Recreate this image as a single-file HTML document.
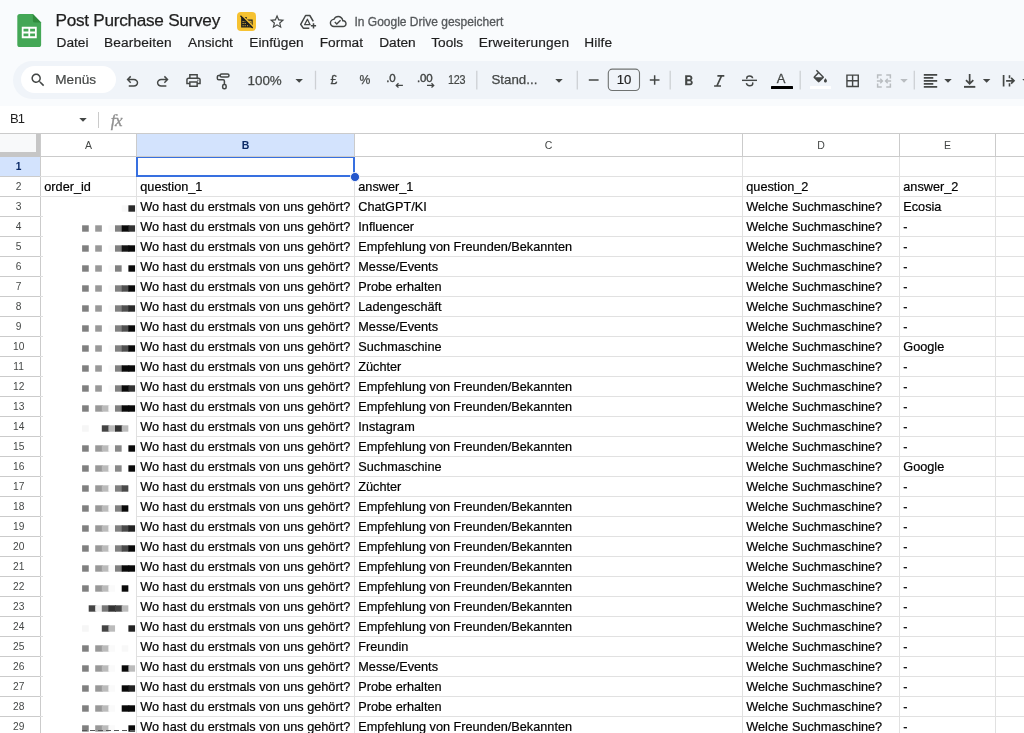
<!DOCTYPE html>
<html lang="de"><head><meta charset="utf-8"><title>Post Purchase Survey</title>
<style>
html,body{margin:0;padding:0;}
#w{position:absolute;left:0;top:0;width:1024px;height:733px;overflow:hidden;will-change:transform;}
body{width:1024px;height:733px;overflow:hidden;background:#f9fbfd;position:relative;font-family:"Liberation Sans",Arial,sans-serif;color:#1f1f1f;}
.abs{position:absolute;}
.t{position:absolute;white-space:nowrap;line-height:1;}
.menu{position:absolute;top:35px;font-size:13.7px;color:#1f1f1f;-webkit-text-stroke:0.2px #1f1f1f;white-space:nowrap;line-height:16px;}
.tb{position:absolute;left:13px;top:61px;width:1040px;height:38px;border-radius:19px;background:#f0f4f9;}
.sep{position:absolute;width:1px;background:#cbcbcb;top:71px;height:19px;}
svg{position:absolute;overflow:visible;}
.fbar{position:absolute;left:0;top:106px;width:1024px;height:27px;background:#fff;border-bottom:1px solid #cbcbcb;}
.grid{position:absolute;left:0;top:133px;width:1024px;height:600px;background:#fff;overflow:hidden;}
.hl{position:absolute;left:0;width:1024px;height:1px;background:#e1e1e1;}
.vl{position:absolute;top:0;width:1px;height:600px;background:#e1e1e1;}
.ch{position:absolute;top:1px;height:22px;line-height:23px;text-align:center;font-size:10.5px;color:#444746;}
.rh{position:absolute;left:0;width:37.300px;height:19px;line-height:19.5px;text-align:center;font-size:10.2px;color:#444746;}
.c{position:absolute;height:19px;line-height:21.3px;font-size:12.7px;color:#000;white-space:nowrap;overflow:hidden;-webkit-text-stroke:0.2px #000;}
.b{position:absolute;width:6.6px;height:6.6px;}
</style></head><body><div id="w">
<div class="t" id="title" style="left:55.5px;top:12px;font-size:17.2px;color:#1f1f1f;letter-spacing:-0.28px;-webkit-text-stroke:0.25px #1f1f1f;">Post Purchase Survey</div>
<div class="abs" style="left:237px;top:12px;width:19px;height:19.300px;border-radius:4px;background:#f6c232;"></div>
<div class="t" id="saved" style="left:354.500px;top:15.500px;font-size:12px;color:#55585b;-webkit-text-stroke:0.3px #55585b;">In Google Drive gespeichert</div>
<div class="menu" id="m0" style="left:56.5px">Datei</div>
<div class="menu" id="m1" style="left:104px;letter-spacing:0.16px">Bearbeiten</div>
<div class="menu" id="m2" style="left:188px">Ansicht</div>
<div class="menu" id="m3" style="left:249.3px;letter-spacing:0.05px">Einfügen</div>
<div class="menu" id="m4" style="left:319.7px">Format</div>
<div class="menu" id="m5" style="left:379.2px">Daten</div>
<div class="menu" id="m6" style="left:431.2px">Tools</div>
<div class="menu" id="m7" style="left:478.8px;letter-spacing:0.18px">Erweiterungen</div>
<div class="menu" id="m8" style="left:584.3px;letter-spacing:0.1px">Hilfe</div>
<div class="tb"></div>
<div class="abs" style="left:21px;top:66px;width:95px;height:27px;border-radius:13.500px;background:#fff;"></div>
<div class="t" id="menus" style="left:55.300px;top:73.200px;font-size:13.600px;color:#444746;-webkit-text-stroke:0.2px #444746;">Menüs</div>
<div class="t" id="zoom" style="left:247.500px;top:73.700px;font-size:13.400px;color:#444746;-webkit-text-stroke:0.25px #444746;">100%</div>
<div class="t" id="pound" style="left:330.600px;top:73.600px;font-size:12.200px;color:#444746;-webkit-text-stroke:0.3px #444746">£</div>
<div class="t" id="pct" style="left:359.500px;top:73.600px;font-size:12.200px;letter-spacing:-0.3px;color:#444746;-webkit-text-stroke:0.25px #444746">%</div>
<div class="t" id="d0" style="left:386.300px;top:73.200px;font-size:11.500px;color:#444746;-webkit-text-stroke:0.4px #444746;letter-spacing:-0.2px">.0</div>
<div class="t" id="d00" style="left:417px;top:73.200px;font-size:11.500px;color:#444746;-webkit-text-stroke:0.4px #444746;letter-spacing:-0.2px">.00</div>
<div class="t" id="n123" style="left:448.300px;top:73.800px;font-size:12.300px;color:#444746;letter-spacing:-0.3px;transform:scaleX(0.88);transform-origin:0 0;-webkit-text-stroke:0.2px #444746">123</div>
<div class="t" id="stand" style="left:491.500px;top:73.200px;font-size:13.300px;color:#444746;-webkit-text-stroke:0.25px #444746;">Stand...</div>
<div class="t" id="ten" style="left:608px;width:32px;text-align:center;top:73.300px;font-size:13.200px;color:#1f1f1f;-webkit-text-stroke:0.2px #1f1f1f;">10</div>
<div class="t" id="tcA" style="left:776.700px;top:72.300px;font-size:13px;color:#444746;-webkit-text-stroke:0.3px #444746">A</div>
<div class="abs" style="left:770.500px;top:85.800px;width:22px;height:3.700px;border-radius:0.500px;background:#000"></div>
<div class="abs" style="left:809.700px;top:85.800px;width:21.800px;height:3.700px;border-radius:0.500px;background:#fff"></div>
<div class="fbar"></div>
<div class="t" id="b1" style="left:9.900px;top:112px;font-size:13px;color:#1f1f1f;letter-spacing:-0.800px">B1</div>
<div class="abs" style="left:98px;top:112px;width:1px;height:16px;background:#cbcbcb"></div>
<div class="t" id="fx" style="left:110.700px;top:111.700px;font-size:17px;color:#909090;font-family:'Liberation Serif',serif;font-style:italic;letter-spacing:-0.5px;-webkit-text-stroke:0.35px #909090">fx</div>
<svg style="left:0;top:0" width="1024" height="133" viewBox="0 0 1024 133">
<svg x="17.3" y="14" overflow="visible" width="24.300" height="33" viewBox="0 0 25 33" preserveAspectRatio="none">
<path d="M2.6 0H16L24.5 8.6V30.4Q24.5 33 21.9 33H2.6Q0 33 0 30.400V2.600Q0 0 2.600 0Z" fill="#44a756"/>
<path d="M16 0L24.500 8.600H18.200Q16 8.600 16 6.400Z" fill="#2f8a3c"/>
<path d="M4.600 12.800H20v11.400H4.600Z M6.400 14.700v2.900h5v-2.900Z M13.200 14.700v2.900h5v-2.900Z M6.400 19.400v2.900h5v-2.900Z M13.200 19.400v2.900h5v-2.900Z" fill="#fff" fill-rule="evenodd"/>
</svg>
<svg x="240" y="15" overflow="visible" width="13.500" height="13.500" viewBox="0 0 24 24">
<path d="M2 3.500H12V8H22.500V22H2Z" fill="#1f1f1f"/>
<path d="M4.600 10.500h1.800v1.800H4.600zM8.300 10.500h1.800v1.800H8.300zM4.600 14.300h1.800v1.800H4.600zM8.300 14.300h1.800v1.800H8.300zM4.600 18h1.800v1.800H4.600zM8.300 18h1.800v1.800H8.300zM12.600 18h1.800v1.800h-1.800zM16.600 18h1.800v1.800h-1.800zM14 10h6.500v1.800H14zM20.500 10v6h-1.600v-6z" fill="#f6c232"/>
<path d="M3.200 0.200L24.700 21.700" stroke="#f6c232" stroke-width="2.600" fill="none"/>
<path d="M0.800 1.300L22.600 23.100" stroke="#1f1f1f" stroke-width="2.300" fill="none"/>
</svg>
<svg x="268.3" y="13" overflow="visible" width="17.500" height="17.500" viewBox="0 0 24 24"><path fill="#444746" d="M22 9.240l-7.190-.620L12 2 9.190 8.630 2 9.240l5.460 4.730L5.820 21 12 17.270 18.180 21l-1.630-7.030L22 9.240zM12 15.400l-3.760 2.270 1-4.280-3.320-2.880 4.380-.380L12 6.100l1.710 4.040 4.380.380-3.320 2.880 1 4.280L12 15.400z"/></svg>
<svg x="299" y="13" overflow="visible" width="18" height="17" viewBox="299 13 18 17" fill="none" stroke="#444746" stroke-width="1.500" stroke-linejoin="round">
<path d="M309.300 28.200H303.300L300.700 24.400 305.600 15.500H309.800L313.300 21.300"/>
<path d="M307.400 19.300L304.600 24.700H310.100Z" stroke-width="1.300"/>
<path d="M313.500 23.200V28.500M310.900 25.850H316.100"/>
</svg>
<svg x="329.7" y="13" overflow="visible" width="17" height="17" viewBox="0 0 24 24"><path fill="#444746" d="M19.350 10.040C18.670 6.590 15.640 4 12 4 9.110 4 6.600 5.640 5.350 8.040 2.340 8.360 0 10.910 0 14c0 3.310 2.690 6 6 6h13c2.760 0 5-2.240 5-5 0-2.640-2.050-4.780-4.650-4.960zM19 18H6c-2.210 0-4-1.790-4-4 0-2.050 1.530-3.760 3.560-3.970l1.070-.110.500-.950C8.080 7.140 9.940 6 12 6c2.620 0 4.880 1.860 5.390 4.430l.300 1.500 1.530.110c1.560.100 2.780 1.410 2.780 2.960 0 1.650-1.350 3-3 3zm-9-3.820l-2.090-2.090L6.500 13.500 10 17l6.010-6.010-1.410-1.410z"/></svg>
<svg x="29.25" y="71.25" overflow="visible" width="17.5" height="17.5" viewBox="0 0 24 24"><path fill="#444746" d="M15.500 14h-.790l-.280-.270C15.410 12.590 16 11.110 16 9.500 16 5.910 13.090 3 9.500 3S3 5.910 3 9.500 5.910 16 9.500 16c1.610 0 3.090-.590 4.230-1.570l.270.280v.790l5 4.990L20.490 19l-4.990-5zm-6 0C7.010 14 5 11.990 5 9.500S7.010 5 9.500 5 14 7.010 14 9.500 11.990 14 9.500 14z"/></svg>
<svg x="123.65" y="72.95" overflow="visible" width="17.5" height="17.5" viewBox="0 -960 960 960"><path fill="#444746" d="M280-200v-80h284q63 0 109.500-40T720-420q0-60-46.500-100T564-560H312l104 104-56 56-200-200 200-200 56 56-104 104h252q97 0 166.500 63T800-420q0 94-69.500 157T564-200H280Z"/></svg>
<svg x="153.95" y="72.95" overflow="visible" width="17.5" height="17.5" viewBox="0 -960 960 960"><path fill="#444746" d="M396-200q-97 0-166.500-63T160-420q0-94 69.500-157T396-640h252L544-744l56-56 200 200-200 200-56-56 104-104H396q-63 0-109.500 40T240-420q0 60 46.500 100T396-280h284v80H396Z"/></svg>
<svg x="184.75" y="71.75" overflow="visible" width="17.5" height="17.5" viewBox="0 0 24 24"><path fill="#444746" d="M19 8h-1V3H6v5H5c-1.660 0-3 1.340-3 3v6h4v4h12v-4h4v-6c0-1.660-1.340-3-3-3zM8 5h8v3H8V5zm8 12v2H8v-4h8v2zm2-2v-2H6v2H4v-4c0-.550.450-1 1-1h14c.550 0 1 .450 1 1v4h-2z"/><circle cx="18" cy="11.500" r="1" fill="#444746"/></svg>
<svg x="215" y="72" overflow="visible" width="17" height="19" viewBox="215 72 17 19" fill="none" stroke="#444746" stroke-width="1.500">
<rect x="220.150" y="74" width="8.850" height="2.900" rx="1.450"/>
<path d="M220 75.500H218.700Q217.350 75.500 217.350 76.850V78.400Q217.350 79.750 218.700 79.750H223.100Q224.400 79.750 224.400 81.050V84"/>
<rect x="222.650" y="84.450" width="3.500" height="4.300" rx="1.500"/></svg>
<svg x="290.2" y="71.4" overflow="visible" width="18" height="18" viewBox="0 0 24 24"><path fill="#444746" d="M7 10l5 5 5-5z"/></svg>
<svg x="300" y="60" overflow="visible" width="700" height="40" viewBox="300 60 700 40" fill="none" stroke="#cdd0d4" stroke-width="1.300"><path d="M315.500 70.700V89.500M476.800 70.700V89.500M577.300 70.700V89.500M670.200 70.700V89.500M800.200 70.700V89.500M914.300 70.700V89.500"/></svg>
<svg x="395" y="81.9" overflow="visible" width="9" height="7" viewBox="0 0 9 7"><path d="M7.900 3.500H1.600M3.500 1.400L1.300 3.500 3.500 5.600" fill="none" stroke="#444746" stroke-width="1.300"/></svg>
<svg x="426" y="81.9" overflow="visible" width="9" height="7" viewBox="0 0 9 7"><path d="M1 3.500H7.400M5.500 1.400L7.700 3.500 5.500 5.600" fill="none" stroke="#444746" stroke-width="1.300"/></svg>
<svg x="550" y="71.4" overflow="visible" width="18" height="18" viewBox="0 0 24 24"><path fill="#444746" d="M7 10l5 5 5-5z"/></svg>
<svg x="585" y="66" overflow="visible" width="80" height="28" viewBox="585 66 80 28" fill="none"><path d="M588.800 80H598.600M649.800 80H659.500M654.650 75.200V84.800" stroke="#444746" stroke-width="1.500"/><rect x="608.300" y="69.100" width="31.200" height="21.400" rx="4" stroke="#6f7271" stroke-width="1.100"/></svg>
<svg x="680.2" y="72.5" overflow="visible" width="17" height="17" viewBox="0 0 24 24"><path fill="#444746" d="M15.600 10.790c.970-.670 1.650-1.770 1.650-2.790 0-2.260-1.750-4-4-4H7v14h7.040c2.090 0 3.710-1.700 3.710-3.790 0-1.520-.860-2.820-2.150-3.420zM10 6.500h3c.830 0 1.500.670 1.500 1.500s-.670 1.500-1.500 1.500h-3v-3zm3.500 9H10v-3h3.500c.830 0 1.500.670 1.500 1.500s-.670 1.500-1.500 1.500z"/></svg>
<svg x="712" y="73" overflow="visible" width="15" height="16" viewBox="712 73 15 16" fill="none" stroke="#444746" stroke-width="1.700"><path d="M717.400 75.900H724.300M714.100 86H721M721.500 75.900L716.900 86"/></svg>
<svg x="741" y="72.2" overflow="visible" width="17" height="17" viewBox="0 0 24 24" fill="none" stroke="#444746">
<path d="M16.400 8.600C16.200 6.600 14.600 5.300 12.200 5.300 9.700 5.300 8.200 6.500 8.200 8.300c0 .5.100.9.300 1.200" stroke-width="2.100"/>
<path d="M7.600 15.500c.3 2.200 2 3.500 4.600 3.500 2.700 0 4.400-1.300 4.400-3.200 0-.6-.1-1.100-.4-1.500" stroke-width="2.100"/>
<path d="M1.400 11.500H22.600" stroke-width="2"/></svg>
<svg x="811.2" y="69.7" overflow="visible" width="18" height="18" viewBox="0 0 24 24"><path fill="#444746" d="M16.560 8.940L7.620 0 6.210 1.410l2.380 2.380-5.150 5.150c-.590.590-.590 1.540 0 2.120l5.500 5.500c.290.290.680.440 1.060.440s.770-.150 1.060-.440l5.500-5.500c.590-.580.590-1.530 0-2.120zM5.210 10L10 5.210 14.790 10H5.210zM19 11.500s-2 2.170-2 3.500c0 1.100.900 2 2 2s2-.900 2-2c0-1.330-2-3.500-2-3.500z"/></svg>
<svg x="844.1" y="72.3" overflow="visible" width="17" height="17" viewBox="0 0 24 24"><path fill="#444746" d="M3 3v18h18V3H3zm8 16H5v-6h6v6zm0-8H5V5h6v6zm8 8h-6v-6h6v6zm0-8h-6V5h6v6z"/></svg>
<svg x="875" y="72" overflow="visible" width="18" height="18" viewBox="0 0 24 24" fill="none" stroke="#b9bdc1" stroke-width="2">
<path d="M9 4H3.500V8.800M9 20H3.500V15.200M15 4H20.500V8.800M15 20H20.500V15.200"/>
<path d="M2.500 12H9.500M7 9L10 12 7 15M21.500 12H14.500M17 9L14 12 17 15" stroke-width="1.800"/></svg>
<svg x="895" y="71.4" overflow="visible" width="18" height="18" viewBox="0 0 24 24"><path fill="#b9bdc1" d="M7 10l5 5 5-5z"/></svg>
<svg x="920" y="70" overflow="visible" width="20" height="22" viewBox="920 70 20 22" fill="none" stroke="#444746" stroke-width="1.650"><path d="M923.800 74.900H937.200M923.800 77.900H933.300M923.800 80.900H937.200M923.800 83.900H933.300M923.800 86.900H937.200"/></svg>
<svg x="939" y="71.4" overflow="visible" width="18" height="18" viewBox="0 0 24 24"><path fill="#444746" d="M7 10l5 5 5-5z"/></svg>
<svg x="960" y="70" overflow="visible" width="20" height="22" viewBox="960 70 20 22" fill="none" stroke="#444746" stroke-width="1.700"><path d="M969.650 74V83.300M966 80.100L969.650 83.750 973.300 80.100"/><path d="M964 86.850H975.300" stroke-width="1.900"/></svg>
<svg x="977.6" y="71.4" overflow="visible" width="18" height="18" viewBox="0 0 24 24"><path fill="#444746" d="M7 10l5 5 5-5z"/></svg>
<svg x="1000" y="70" overflow="visible" width="20" height="22" viewBox="1000 70 20 22" fill="none" stroke="#444746" stroke-width="1.700">
<path d="M1003.600 75V86.600M1006.100 80.800H1013.300M1011.100 77.900L1014 80.800 1011.100 83.700"/><path d="M1009.500 75.300V78.300M1009.500 83.300V86.600" stroke-width="1.600"/></svg>
<svg x="1017" y="71.4" overflow="visible" width="18" height="18" viewBox="0 0 24 24"><path fill="#444746" d="M7 10l5 5 5-5z"/></svg>
<svg x="74" y="110.5" overflow="visible" width="18" height="18" viewBox="0 0 24 24"><path fill="#444746" d="M7 10l5 5 5-5z"/></svg>
</svg>
<div class="grid">
<div class="hl" style="top:0;background:#cbcbcb"></div>
<div class="abs" style="left:0;top:1px;width:41px;height:23px;background:#c6c6c6"></div>
<div class="abs" style="left:0;top:1px;width:36px;height:18px;background:#f8f9fa"></div>
<div class="abs" style="left:137px;top:1px;width:217px;height:22px;background:#d3e3fd"></div>
<div class="abs" style="left:0;top:24px;width:40px;height:19px;background:#d3e3fd"></div>
<div class="ch" style="left:41px;width:95px;">A</div>
<div class="vl" style="left:136px"></div>
<div class="abs" style="left:136px;top:0;width:1px;height:23px;background:#cbcbcb"></div>
<div class="ch" style="left:137px;width:217px;font-weight:bold;color:#0b2a66;">B</div>
<div class="vl" style="left:354px"></div>
<div class="abs" style="left:354px;top:0;width:1px;height:23px;background:#cbcbcb"></div>
<div class="ch" style="left:355px;width:387px;">C</div>
<div class="vl" style="left:742px"></div>
<div class="abs" style="left:742px;top:0;width:1px;height:23px;background:#cbcbcb"></div>
<div class="ch" style="left:743px;width:156px;">D</div>
<div class="vl" style="left:899px"></div>
<div class="abs" style="left:899px;top:0;width:1px;height:23px;background:#cbcbcb"></div>
<div class="ch" style="left:900px;width:95px;">E</div>
<div class="vl" style="left:995px"></div>
<div class="abs" style="left:995px;top:0;width:1px;height:23px;background:#cbcbcb"></div>
<div class="ch" style="left:996px;width:104px;">F</div>
<div class="vl" style="left:1100px"></div>
<div class="abs" style="left:1100px;top:0;width:1px;height:23px;background:#cbcbcb"></div>
<div class="vl" style="left:40px;background:#cbcbcb"></div>
<div class="hl" style="top:23px;left:41px;background:#cbcbcb"></div>
<div class="hl" style="top:43px"></div>
<div class="abs" style="left:0;top:43px;width:40px;height:1px;background:#cbcbcb"></div>
<div class="rh" style="top:24px;font-weight:bold;color:#0b2a66;">1</div>
<div class="hl" style="top:63px"></div>
<div class="abs" style="left:0;top:63px;width:40px;height:1px;background:#cbcbcb"></div>
<div class="rh" style="top:44px;">2</div>
<div class="c" style="left:44.3px;top:44px;width:91.5px">order_id</div>
<div class="c" style="left:140.3px;top:44px;width:213.5px">question_1</div>
<div class="c" style="left:358.3px;top:44px;width:383.5px">answer_1</div>
<div class="c" style="left:746.3px;top:44px;width:152.5px">question_2</div>
<div class="c" style="left:903.3px;top:44px;width:91.5px">answer_2</div>
<div class="hl" style="top:83px"></div>
<div class="abs" style="left:0;top:83px;width:40px;height:1px;background:#cbcbcb"></div>
<div class="rh" style="top:64px;">3</div>
<div class="c" style="left:140.3px;top:64px;width:213.5px">Wo hast du erstmals von uns gehört?</div>
<div class="c" style="left:358.3px;top:64px;width:383.5px">ChatGPT/KI</div>
<div class="c" style="left:746.3px;top:64px;width:152.5px">Welche Suchmaschine?</div>
<div class="c" style="left:903.3px;top:64px;width:91.5px">Ecosia</div>
<div class="hl" style="top:103px"></div>
<div class="abs" style="left:0;top:103px;width:40px;height:1px;background:#cbcbcb"></div>
<div class="rh" style="top:84px;">4</div>
<div class="c" style="left:140.3px;top:84px;width:213.5px">Wo hast du erstmals von uns gehört?</div>
<div class="c" style="left:358.3px;top:84px;width:383.5px">Influencer</div>
<div class="c" style="left:746.3px;top:84px;width:152.5px">Welche Suchmaschine?</div>
<div class="c" style="left:903.3px;top:84px;width:91.5px">-</div>
<div class="hl" style="top:123px"></div>
<div class="abs" style="left:0;top:123px;width:40px;height:1px;background:#cbcbcb"></div>
<div class="rh" style="top:104px;">5</div>
<div class="c" style="left:140.3px;top:104px;width:213.5px">Wo hast du erstmals von uns gehört?</div>
<div class="c" style="left:358.3px;top:104px;width:383.5px">Empfehlung von Freunden/Bekannten</div>
<div class="c" style="left:746.3px;top:104px;width:152.5px">Welche Suchmaschine?</div>
<div class="c" style="left:903.3px;top:104px;width:91.5px">-</div>
<div class="hl" style="top:143px"></div>
<div class="abs" style="left:0;top:143px;width:40px;height:1px;background:#cbcbcb"></div>
<div class="rh" style="top:124px;">6</div>
<div class="c" style="left:140.3px;top:124px;width:213.5px">Wo hast du erstmals von uns gehört?</div>
<div class="c" style="left:358.3px;top:124px;width:383.5px">Messe/Events</div>
<div class="c" style="left:746.3px;top:124px;width:152.5px">Welche Suchmaschine?</div>
<div class="c" style="left:903.3px;top:124px;width:91.5px">-</div>
<div class="hl" style="top:163px"></div>
<div class="abs" style="left:0;top:163px;width:40px;height:1px;background:#cbcbcb"></div>
<div class="rh" style="top:144px;">7</div>
<div class="c" style="left:140.3px;top:144px;width:213.5px">Wo hast du erstmals von uns gehört?</div>
<div class="c" style="left:358.3px;top:144px;width:383.5px">Probe erhalten</div>
<div class="c" style="left:746.3px;top:144px;width:152.5px">Welche Suchmaschine?</div>
<div class="c" style="left:903.3px;top:144px;width:91.5px">-</div>
<div class="hl" style="top:183px"></div>
<div class="abs" style="left:0;top:183px;width:40px;height:1px;background:#cbcbcb"></div>
<div class="rh" style="top:164px;">8</div>
<div class="c" style="left:140.3px;top:164px;width:213.5px">Wo hast du erstmals von uns gehört?</div>
<div class="c" style="left:358.3px;top:164px;width:383.5px">Ladengeschäft</div>
<div class="c" style="left:746.3px;top:164px;width:152.5px">Welche Suchmaschine?</div>
<div class="c" style="left:903.3px;top:164px;width:91.5px">-</div>
<div class="hl" style="top:203px"></div>
<div class="abs" style="left:0;top:203px;width:40px;height:1px;background:#cbcbcb"></div>
<div class="rh" style="top:184px;">9</div>
<div class="c" style="left:140.3px;top:184px;width:213.5px">Wo hast du erstmals von uns gehört?</div>
<div class="c" style="left:358.3px;top:184px;width:383.5px">Messe/Events</div>
<div class="c" style="left:746.3px;top:184px;width:152.5px">Welche Suchmaschine?</div>
<div class="c" style="left:903.3px;top:184px;width:91.5px">-</div>
<div class="hl" style="top:223px"></div>
<div class="abs" style="left:0;top:223px;width:40px;height:1px;background:#cbcbcb"></div>
<div class="rh" style="top:204px;">10</div>
<div class="c" style="left:140.3px;top:204px;width:213.5px">Wo hast du erstmals von uns gehört?</div>
<div class="c" style="left:358.3px;top:204px;width:383.5px">Suchmaschine</div>
<div class="c" style="left:746.3px;top:204px;width:152.5px">Welche Suchmaschine?</div>
<div class="c" style="left:903.3px;top:204px;width:91.5px">Google</div>
<div class="hl" style="top:243px"></div>
<div class="abs" style="left:0;top:243px;width:40px;height:1px;background:#cbcbcb"></div>
<div class="rh" style="top:224px;">11</div>
<div class="c" style="left:140.3px;top:224px;width:213.5px">Wo hast du erstmals von uns gehört?</div>
<div class="c" style="left:358.3px;top:224px;width:383.5px">Züchter</div>
<div class="c" style="left:746.3px;top:224px;width:152.5px">Welche Suchmaschine?</div>
<div class="c" style="left:903.3px;top:224px;width:91.5px">-</div>
<div class="hl" style="top:263px"></div>
<div class="abs" style="left:0;top:263px;width:40px;height:1px;background:#cbcbcb"></div>
<div class="rh" style="top:244px;">12</div>
<div class="c" style="left:140.3px;top:244px;width:213.5px">Wo hast du erstmals von uns gehört?</div>
<div class="c" style="left:358.3px;top:244px;width:383.5px">Empfehlung von Freunden/Bekannten</div>
<div class="c" style="left:746.3px;top:244px;width:152.5px">Welche Suchmaschine?</div>
<div class="c" style="left:903.3px;top:244px;width:91.5px">-</div>
<div class="hl" style="top:283px"></div>
<div class="abs" style="left:0;top:283px;width:40px;height:1px;background:#cbcbcb"></div>
<div class="rh" style="top:264px;">13</div>
<div class="c" style="left:140.3px;top:264px;width:213.5px">Wo hast du erstmals von uns gehört?</div>
<div class="c" style="left:358.3px;top:264px;width:383.5px">Empfehlung von Freunden/Bekannten</div>
<div class="c" style="left:746.3px;top:264px;width:152.5px">Welche Suchmaschine?</div>
<div class="c" style="left:903.3px;top:264px;width:91.5px">-</div>
<div class="hl" style="top:303px"></div>
<div class="abs" style="left:0;top:303px;width:40px;height:1px;background:#cbcbcb"></div>
<div class="rh" style="top:284px;">14</div>
<div class="c" style="left:140.3px;top:284px;width:213.5px">Wo hast du erstmals von uns gehört?</div>
<div class="c" style="left:358.3px;top:284px;width:383.5px">Instagram</div>
<div class="c" style="left:746.3px;top:284px;width:152.5px">Welche Suchmaschine?</div>
<div class="c" style="left:903.3px;top:284px;width:91.5px">-</div>
<div class="hl" style="top:323px"></div>
<div class="abs" style="left:0;top:323px;width:40px;height:1px;background:#cbcbcb"></div>
<div class="rh" style="top:304px;">15</div>
<div class="c" style="left:140.3px;top:304px;width:213.5px">Wo hast du erstmals von uns gehört?</div>
<div class="c" style="left:358.3px;top:304px;width:383.5px">Empfehlung von Freunden/Bekannten</div>
<div class="c" style="left:746.3px;top:304px;width:152.5px">Welche Suchmaschine?</div>
<div class="c" style="left:903.3px;top:304px;width:91.5px">-</div>
<div class="hl" style="top:343px"></div>
<div class="abs" style="left:0;top:343px;width:40px;height:1px;background:#cbcbcb"></div>
<div class="rh" style="top:324px;">16</div>
<div class="c" style="left:140.3px;top:324px;width:213.5px">Wo hast du erstmals von uns gehört?</div>
<div class="c" style="left:358.3px;top:324px;width:383.5px">Suchmaschine</div>
<div class="c" style="left:746.3px;top:324px;width:152.5px">Welche Suchmaschine?</div>
<div class="c" style="left:903.3px;top:324px;width:91.5px">Google</div>
<div class="hl" style="top:363px"></div>
<div class="abs" style="left:0;top:363px;width:40px;height:1px;background:#cbcbcb"></div>
<div class="rh" style="top:344px;">17</div>
<div class="c" style="left:140.3px;top:344px;width:213.5px">Wo hast du erstmals von uns gehört?</div>
<div class="c" style="left:358.3px;top:344px;width:383.5px">Züchter</div>
<div class="c" style="left:746.3px;top:344px;width:152.5px">Welche Suchmaschine?</div>
<div class="c" style="left:903.3px;top:344px;width:91.5px">-</div>
<div class="hl" style="top:383px"></div>
<div class="abs" style="left:0;top:383px;width:40px;height:1px;background:#cbcbcb"></div>
<div class="rh" style="top:364px;">18</div>
<div class="c" style="left:140.3px;top:364px;width:213.5px">Wo hast du erstmals von uns gehört?</div>
<div class="c" style="left:358.3px;top:364px;width:383.5px">Empfehlung von Freunden/Bekannten</div>
<div class="c" style="left:746.3px;top:364px;width:152.5px">Welche Suchmaschine?</div>
<div class="c" style="left:903.3px;top:364px;width:91.5px">-</div>
<div class="hl" style="top:403px"></div>
<div class="abs" style="left:0;top:403px;width:40px;height:1px;background:#cbcbcb"></div>
<div class="rh" style="top:384px;">19</div>
<div class="c" style="left:140.3px;top:384px;width:213.5px">Wo hast du erstmals von uns gehört?</div>
<div class="c" style="left:358.3px;top:384px;width:383.5px">Empfehlung von Freunden/Bekannten</div>
<div class="c" style="left:746.3px;top:384px;width:152.5px">Welche Suchmaschine?</div>
<div class="c" style="left:903.3px;top:384px;width:91.5px">-</div>
<div class="hl" style="top:423px"></div>
<div class="abs" style="left:0;top:423px;width:40px;height:1px;background:#cbcbcb"></div>
<div class="rh" style="top:404px;">20</div>
<div class="c" style="left:140.3px;top:404px;width:213.5px">Wo hast du erstmals von uns gehört?</div>
<div class="c" style="left:358.3px;top:404px;width:383.5px">Empfehlung von Freunden/Bekannten</div>
<div class="c" style="left:746.3px;top:404px;width:152.5px">Welche Suchmaschine?</div>
<div class="c" style="left:903.3px;top:404px;width:91.5px">-</div>
<div class="hl" style="top:443px"></div>
<div class="abs" style="left:0;top:443px;width:40px;height:1px;background:#cbcbcb"></div>
<div class="rh" style="top:424px;">21</div>
<div class="c" style="left:140.3px;top:424px;width:213.5px">Wo hast du erstmals von uns gehört?</div>
<div class="c" style="left:358.3px;top:424px;width:383.5px">Empfehlung von Freunden/Bekannten</div>
<div class="c" style="left:746.3px;top:424px;width:152.5px">Welche Suchmaschine?</div>
<div class="c" style="left:903.3px;top:424px;width:91.5px">-</div>
<div class="hl" style="top:463px"></div>
<div class="abs" style="left:0;top:463px;width:40px;height:1px;background:#cbcbcb"></div>
<div class="rh" style="top:444px;">22</div>
<div class="c" style="left:140.3px;top:444px;width:213.5px">Wo hast du erstmals von uns gehört?</div>
<div class="c" style="left:358.3px;top:444px;width:383.5px">Empfehlung von Freunden/Bekannten</div>
<div class="c" style="left:746.3px;top:444px;width:152.5px">Welche Suchmaschine?</div>
<div class="c" style="left:903.3px;top:444px;width:91.5px">-</div>
<div class="hl" style="top:483px"></div>
<div class="abs" style="left:0;top:483px;width:40px;height:1px;background:#cbcbcb"></div>
<div class="rh" style="top:464px;">23</div>
<div class="c" style="left:140.3px;top:464px;width:213.5px">Wo hast du erstmals von uns gehört?</div>
<div class="c" style="left:358.3px;top:464px;width:383.5px">Empfehlung von Freunden/Bekannten</div>
<div class="c" style="left:746.3px;top:464px;width:152.5px">Welche Suchmaschine?</div>
<div class="c" style="left:903.3px;top:464px;width:91.5px">-</div>
<div class="hl" style="top:503px"></div>
<div class="abs" style="left:0;top:503px;width:40px;height:1px;background:#cbcbcb"></div>
<div class="rh" style="top:484px;">24</div>
<div class="c" style="left:140.3px;top:484px;width:213.5px">Wo hast du erstmals von uns gehört?</div>
<div class="c" style="left:358.3px;top:484px;width:383.5px">Empfehlung von Freunden/Bekannten</div>
<div class="c" style="left:746.3px;top:484px;width:152.5px">Welche Suchmaschine?</div>
<div class="c" style="left:903.3px;top:484px;width:91.5px">-</div>
<div class="hl" style="top:523px"></div>
<div class="abs" style="left:0;top:523px;width:40px;height:1px;background:#cbcbcb"></div>
<div class="rh" style="top:504px;">25</div>
<div class="c" style="left:140.3px;top:504px;width:213.5px">Wo hast du erstmals von uns gehört?</div>
<div class="c" style="left:358.3px;top:504px;width:383.5px">Freundin</div>
<div class="c" style="left:746.3px;top:504px;width:152.5px">Welche Suchmaschine?</div>
<div class="c" style="left:903.3px;top:504px;width:91.5px">-</div>
<div class="hl" style="top:543px"></div>
<div class="abs" style="left:0;top:543px;width:40px;height:1px;background:#cbcbcb"></div>
<div class="rh" style="top:524px;">26</div>
<div class="c" style="left:140.3px;top:524px;width:213.5px">Wo hast du erstmals von uns gehört?</div>
<div class="c" style="left:358.3px;top:524px;width:383.5px">Messe/Events</div>
<div class="c" style="left:746.3px;top:524px;width:152.5px">Welche Suchmaschine?</div>
<div class="c" style="left:903.3px;top:524px;width:91.5px">-</div>
<div class="hl" style="top:563px"></div>
<div class="abs" style="left:0;top:563px;width:40px;height:1px;background:#cbcbcb"></div>
<div class="rh" style="top:544px;">27</div>
<div class="c" style="left:140.3px;top:544px;width:213.5px">Wo hast du erstmals von uns gehört?</div>
<div class="c" style="left:358.3px;top:544px;width:383.5px">Probe erhalten</div>
<div class="c" style="left:746.3px;top:544px;width:152.5px">Welche Suchmaschine?</div>
<div class="c" style="left:903.3px;top:544px;width:91.5px">-</div>
<div class="hl" style="top:583px"></div>
<div class="abs" style="left:0;top:583px;width:40px;height:1px;background:#cbcbcb"></div>
<div class="rh" style="top:564px;">28</div>
<div class="c" style="left:140.3px;top:564px;width:213.5px">Wo hast du erstmals von uns gehört?</div>
<div class="c" style="left:358.3px;top:564px;width:383.5px">Probe erhalten</div>
<div class="c" style="left:746.3px;top:564px;width:152.5px">Welche Suchmaschine?</div>
<div class="c" style="left:903.3px;top:564px;width:91.5px">-</div>
<div class="hl" style="top:603px"></div>
<div class="abs" style="left:0;top:603px;width:40px;height:1px;background:#cbcbcb"></div>
<div class="rh" style="top:584px;">29</div>
<div class="c" style="left:140.3px;top:584px;width:213.5px">Wo hast du erstmals von uns gehört?</div>
<div class="c" style="left:358.3px;top:584px;width:383.5px">Empfehlung von Freunden/Bekannten</div>
<div class="c" style="left:746.3px;top:584px;width:152.5px">Welche Suchmaschine?</div>
<div class="c" style="left:903.3px;top:584px;width:91.5px">-</div>
<div class="hl" style="top:623px"></div>
<div class="abs" style="left:0;top:623px;width:40px;height:1px;background:#cbcbcb"></div>
<div class="rh" style="top:604px;">30</div>
<div class="abs" style="left:42.500px;top:64.500px;width:93px;height:540px;background:#fff"></div>
<svg style="left:0;top:0" width="140" height="600" viewBox="0 0 140 600">
<rect x="121.7" y="72.3" width="7.6" height="6.4" fill="#f8f8f8"/>
<rect x="128.4" y="72.3" width="6.65" height="6.4" fill="#2a2a2a"/>
<rect x="82.1" y="92.3" width="6.65" height="6.4" fill="#808080"/>
<rect x="95.2" y="92.3" width="6.65" height="6.4" fill="#999"/>
<rect x="108.4" y="92.3" width="7.6" height="6.4" fill="#fafafa"/>
<rect x="115" y="92.3" width="7.6" height="6.4" fill="#808080"/>
<rect x="121.7" y="92.3" width="7.6" height="6.4" fill="#0a0a0a"/>
<rect x="128.4" y="92.3" width="6.65" height="6.4" fill="#333"/>
<rect x="82.1" y="112.3" width="6.65" height="6.4" fill="#808080"/>
<rect x="95.2" y="112.3" width="6.65" height="6.4" fill="#999"/>
<rect x="108.4" y="112.3" width="7.6" height="6.4" fill="#fafafa"/>
<rect x="115" y="112.3" width="7.6" height="6.4" fill="#808080"/>
<rect x="121.7" y="112.3" width="7.6" height="6.4" fill="#151515"/>
<rect x="128.4" y="112.3" width="6.65" height="6.4" fill="#0a0a0a"/>
<rect x="82.1" y="132.3" width="6.65" height="6.4" fill="#808080"/>
<rect x="95.2" y="132.3" width="6.65" height="6.4" fill="#999"/>
<rect x="108.4" y="132.3" width="7.6" height="6.4" fill="#fafafa"/>
<rect x="115" y="132.3" width="6.65" height="6.4" fill="#808080"/>
<rect x="128.4" y="132.3" width="6.65" height="6.4" fill="#0a0a0a"/>
<rect x="82.1" y="152.3" width="6.65" height="6.4" fill="#808080"/>
<rect x="95.2" y="152.3" width="6.65" height="6.4" fill="#999"/>
<rect x="108.4" y="152.3" width="7.6" height="6.4" fill="#fafafa"/>
<rect x="115" y="152.3" width="7.6" height="6.4" fill="#808080"/>
<rect x="121.7" y="152.3" width="7.6" height="6.4" fill="#505050"/>
<rect x="128.4" y="152.3" width="6.65" height="6.4" fill="#0a0a0a"/>
<rect x="82.1" y="172.3" width="6.65" height="6.4" fill="#808080"/>
<rect x="95.2" y="172.3" width="6.65" height="6.4" fill="#999"/>
<rect x="108.4" y="172.3" width="7.6" height="6.4" fill="#fafafa"/>
<rect x="115" y="172.3" width="7.6" height="6.4" fill="#808080"/>
<rect x="121.7" y="172.3" width="7.6" height="6.4" fill="#505050"/>
<rect x="128.4" y="172.3" width="6.65" height="6.4" fill="#2a2a2a"/>
<rect x="82.1" y="192.3" width="6.65" height="6.4" fill="#808080"/>
<rect x="95.2" y="192.3" width="6.65" height="6.4" fill="#999"/>
<rect x="108.4" y="192.3" width="7.6" height="6.4" fill="#fafafa"/>
<rect x="115" y="192.3" width="7.6" height="6.4" fill="#808080"/>
<rect x="121.7" y="192.3" width="7.6" height="6.4" fill="#505050"/>
<rect x="128.4" y="192.3" width="6.65" height="6.4" fill="#0a0a0a"/>
<rect x="82.1" y="212.3" width="6.65" height="6.4" fill="#808080"/>
<rect x="95.2" y="212.3" width="6.65" height="6.4" fill="#999"/>
<rect x="108.4" y="212.3" width="7.6" height="6.4" fill="#fafafa"/>
<rect x="115" y="212.3" width="7.6" height="6.4" fill="#808080"/>
<rect x="121.7" y="212.3" width="7.6" height="6.4" fill="#505050"/>
<rect x="128.4" y="212.3" width="6.65" height="6.4" fill="#0a0a0a"/>
<rect x="82.1" y="232.3" width="6.65" height="6.4" fill="#808080"/>
<rect x="95.2" y="232.3" width="6.65" height="6.4" fill="#999"/>
<rect x="108.4" y="232.3" width="7.6" height="6.4" fill="#fafafa"/>
<rect x="115" y="232.3" width="7.6" height="6.4" fill="#808080"/>
<rect x="121.7" y="232.3" width="7.6" height="6.4" fill="#0a0a0a"/>
<rect x="128.4" y="232.3" width="6.65" height="6.4" fill="#0a0a0a"/>
<rect x="82.1" y="252.3" width="6.65" height="6.4" fill="#808080"/>
<rect x="95.2" y="252.3" width="6.65" height="6.4" fill="#999"/>
<rect x="108.4" y="252.3" width="7.6" height="6.4" fill="#fafafa"/>
<rect x="115" y="252.3" width="7.6" height="6.4" fill="#808080"/>
<rect x="121.7" y="252.3" width="7.6" height="6.4" fill="#0a0a0a"/>
<rect x="128.4" y="252.3" width="6.65" height="6.4" fill="#333"/>
<rect x="82.1" y="272.3" width="6.65" height="6.4" fill="#808080"/>
<rect x="95.2" y="272.3" width="7.6" height="6.4" fill="#999"/>
<rect x="101.8" y="272.3" width="7.6" height="6.4" fill="#bbb"/>
<rect x="108.4" y="272.3" width="7.6" height="6.4" fill="#fafafa"/>
<rect x="115" y="272.3" width="7.6" height="6.4" fill="#808080"/>
<rect x="121.7" y="272.3" width="7.6" height="6.4" fill="#0a0a0a"/>
<rect x="128.4" y="272.3" width="6.65" height="6.4" fill="#0a0a0a"/>
<rect x="82.1" y="292.3" width="6.65" height="6.4" fill="#f6f6f6"/>
<rect x="101.8" y="292.3" width="7.6" height="6.4" fill="#444"/>
<rect x="108.4" y="292.3" width="7.6" height="6.4" fill="#bbb"/>
<rect x="115" y="292.3" width="7.6" height="6.4" fill="#333"/>
<rect x="121.7" y="292.3" width="6.65" height="6.4" fill="#bbb"/>
<rect x="82.1" y="312.3" width="6.65" height="6.4" fill="#808080"/>
<rect x="95.2" y="312.3" width="7.6" height="6.4" fill="#999"/>
<rect x="101.8" y="312.3" width="7.6" height="6.4" fill="#bbb"/>
<rect x="108.4" y="312.3" width="7.6" height="6.4" fill="#fafafa"/>
<rect x="115" y="312.3" width="6.65" height="6.4" fill="#888"/>
<rect x="128.4" y="312.3" width="6.65" height="6.4" fill="#0a0a0a"/>
<rect x="82.1" y="332.3" width="6.65" height="6.4" fill="#808080"/>
<rect x="95.2" y="332.3" width="7.6" height="6.4" fill="#999"/>
<rect x="101.8" y="332.3" width="7.6" height="6.4" fill="#bbb"/>
<rect x="108.4" y="332.3" width="7.6" height="6.4" fill="#fafafa"/>
<rect x="115" y="332.3" width="6.65" height="6.4" fill="#888"/>
<rect x="128.4" y="332.3" width="6.65" height="6.4" fill="#0a0a0a"/>
<rect x="82.1" y="352.3" width="6.65" height="6.4" fill="#808080"/>
<rect x="95.2" y="352.3" width="7.6" height="6.4" fill="#999"/>
<rect x="101.8" y="352.3" width="7.6" height="6.4" fill="#bbb"/>
<rect x="108.4" y="352.3" width="7.6" height="6.4" fill="#fafafa"/>
<rect x="115" y="352.3" width="7.6" height="6.4" fill="#808080"/>
<rect x="121.7" y="352.3" width="6.65" height="6.4" fill="#4a4a4a"/>
<rect x="82.1" y="372.3" width="6.65" height="6.4" fill="#808080"/>
<rect x="95.2" y="372.3" width="7.6" height="6.4" fill="#999"/>
<rect x="101.8" y="372.3" width="7.6" height="6.4" fill="#bbb"/>
<rect x="108.4" y="372.3" width="7.6" height="6.4" fill="#fafafa"/>
<rect x="115" y="372.3" width="7.6" height="6.4" fill="#808080"/>
<rect x="121.7" y="372.3" width="6.65" height="6.4" fill="#0a0a0a"/>
<rect x="82.1" y="392.3" width="6.65" height="6.4" fill="#808080"/>
<rect x="95.2" y="392.3" width="7.6" height="6.4" fill="#999"/>
<rect x="101.8" y="392.3" width="7.6" height="6.4" fill="#bbb"/>
<rect x="108.4" y="392.3" width="7.6" height="6.4" fill="#fafafa"/>
<rect x="115" y="392.3" width="7.6" height="6.4" fill="#808080"/>
<rect x="121.7" y="392.3" width="7.6" height="6.4" fill="#4a4a4a"/>
<rect x="128.4" y="392.3" width="6.65" height="6.4" fill="#222"/>
<rect x="82.1" y="412.3" width="6.65" height="6.4" fill="#808080"/>
<rect x="95.2" y="412.3" width="7.6" height="6.4" fill="#999"/>
<rect x="101.8" y="412.3" width="7.6" height="6.4" fill="#bbb"/>
<rect x="108.4" y="412.3" width="7.6" height="6.4" fill="#fafafa"/>
<rect x="115" y="412.3" width="7.6" height="6.4" fill="#808080"/>
<rect x="121.7" y="412.3" width="7.6" height="6.4" fill="#4a4a4a"/>
<rect x="128.4" y="412.3" width="6.65" height="6.4" fill="#0a0a0a"/>
<rect x="82.1" y="432.3" width="6.65" height="6.4" fill="#808080"/>
<rect x="95.2" y="432.3" width="7.6" height="6.4" fill="#999"/>
<rect x="101.8" y="432.3" width="7.6" height="6.4" fill="#bbb"/>
<rect x="108.4" y="432.3" width="7.6" height="6.4" fill="#fafafa"/>
<rect x="115" y="432.3" width="7.6" height="6.4" fill="#808080"/>
<rect x="121.7" y="432.3" width="7.6" height="6.4" fill="#0a0a0a"/>
<rect x="128.4" y="432.3" width="6.65" height="6.4" fill="#0a0a0a"/>
<rect x="82.1" y="452.3" width="6.65" height="6.4" fill="#808080"/>
<rect x="95.2" y="452.3" width="7.6" height="6.4" fill="#999"/>
<rect x="101.8" y="452.3" width="7.6" height="6.4" fill="#bbb"/>
<rect x="108.4" y="452.3" width="6.65" height="6.4" fill="#fafafa"/>
<rect x="121.7" y="452.3" width="6.65" height="6.4" fill="#0a0a0a"/>
<rect x="88.7" y="472.3" width="7.6" height="6.4" fill="#444"/>
<rect x="95.2" y="472.3" width="7.6" height="6.4" fill="#eee"/>
<rect x="101.8" y="472.3" width="7.6" height="6.4" fill="#777"/>
<rect x="108.4" y="472.3" width="7.6" height="6.4" fill="#333"/>
<rect x="115" y="472.3" width="7.6" height="6.4" fill="#444"/>
<rect x="121.7" y="472.3" width="6.65" height="6.4" fill="#bbb"/>
<rect x="82.1" y="492.3" width="6.65" height="6.4" fill="#f6f6f6"/>
<rect x="101.8" y="492.3" width="7.6" height="6.4" fill="#444"/>
<rect x="108.4" y="492.3" width="6.65" height="6.4" fill="#bbb"/>
<rect x="128.4" y="492.3" width="6.65" height="6.4" fill="#222"/>
<rect x="82.1" y="512.3" width="6.65" height="6.4" fill="#808080"/>
<rect x="95.2" y="512.3" width="7.6" height="6.4" fill="#999"/>
<rect x="101.8" y="512.3" width="7.6" height="6.4" fill="#bbb"/>
<rect x="108.4" y="512.3" width="6.65" height="6.4" fill="#fafafa"/>
<rect x="121.7" y="512.3" width="6.65" height="6.4" fill="#f8f8f8"/>
<rect x="82.1" y="532.3" width="6.65" height="6.4" fill="#808080"/>
<rect x="95.2" y="532.3" width="7.6" height="6.4" fill="#999"/>
<rect x="101.8" y="532.3" width="7.6" height="6.4" fill="#bbb"/>
<rect x="108.4" y="532.3" width="6.65" height="6.4" fill="#fafafa"/>
<rect x="121.7" y="532.3" width="7.6" height="6.4" fill="#0a0a0a"/>
<rect x="128.4" y="532.3" width="6.65" height="6.4" fill="#bbb"/>
<rect x="82.1" y="552.3" width="6.65" height="6.4" fill="#808080"/>
<rect x="95.2" y="552.3" width="7.6" height="6.4" fill="#999"/>
<rect x="101.8" y="552.3" width="7.6" height="6.4" fill="#bbb"/>
<rect x="108.4" y="552.3" width="6.65" height="6.4" fill="#fafafa"/>
<rect x="121.7" y="552.3" width="7.6" height="6.4" fill="#0a0a0a"/>
<rect x="128.4" y="552.3" width="6.65" height="6.4" fill="#222"/>
<rect x="82.1" y="572.3" width="6.65" height="6.4" fill="#808080"/>
<rect x="95.2" y="572.3" width="7.6" height="6.4" fill="#999"/>
<rect x="101.8" y="572.3" width="7.6" height="6.4" fill="#bbb"/>
<rect x="108.4" y="572.3" width="6.65" height="6.4" fill="#fafafa"/>
<rect x="121.7" y="572.3" width="7.6" height="6.4" fill="#0a0a0a"/>
<rect x="128.4" y="572.3" width="6.65" height="6.4" fill="#0a0a0a"/>
<rect x="82.1" y="592.3" width="6.65" height="6.4" fill="#808080"/>
<rect x="95.2" y="592.3" width="7.6" height="6.4" fill="#999"/>
<rect x="101.8" y="592.3" width="7.6" height="6.4" fill="#bbb"/>
<rect x="108.4" y="592.3" width="6.65" height="6.4" fill="#fafafa"/>
<rect x="128.4" y="592.3" width="6.65" height="6.4" fill="#0a0a0a"/>
<path d="M82 597.500H135" stroke="#555" stroke-width="1" stroke-dasharray="5 3" fill="none"/>
</svg>
<div class="abs" style="left:136px;top:24px;width:215px;height:17px;border:2px solid #3870e0;border-top-width:1px;"></div>
<div class="abs" style="left:350.400px;top:39.200px;width:7.500px;height:7.500px;border-radius:50%;background:#2457cc;border:1px solid #fff"></div>
</div>
</div></body></html>
